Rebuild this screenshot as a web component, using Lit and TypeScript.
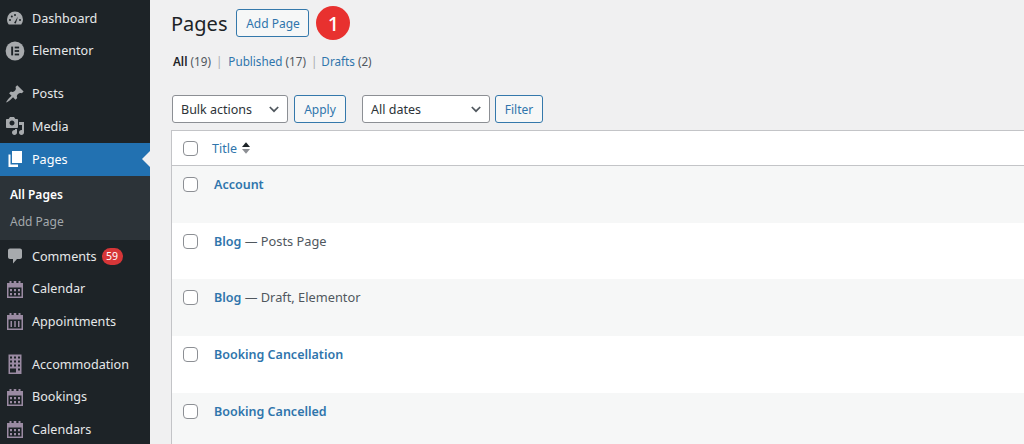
import { LitElement, html, css, svg } from "lit";
import { customElement } from "lit/decorators.js";

const ICONS: Record<string, unknown> = {
  dashboard: svg`<path d="M3.760 16.500h12.480A8 8 0 0 0 18 11.500a8 8 0 1 0-16 0c0 1.900.66 3.640 1.760 5z"/><g fill="#1d2327"><circle cx="5" cy="12" r="1"/><circle cx="6.800" cy="8.500" r="1"/><circle cx="10" cy="7" r="1"/><circle cx="15" cy="12" r="1"/><path d="M9 15 13 8.500l-2.200 7z"/></g>`,
  elementor: svg`<circle cx="10" cy="10" r="9.400"/><g fill="#1d2327"><rect x="6.200" y="5.600" width="1.900" height="8.800"/><rect x="9.700" y="5.600" width="4.400" height="1.800"/><rect x="9.700" y="9.100" width="4.400" height="1.800"/><rect x="9.700" y="12.600" width="4.400" height="1.800"/></g>`,
  posts: svg`<path d="M10.440 3.020l1.820-1.820 6.360 6.350-1.830 1.820c-1.050-.68-2.480-.57-3.410.36l-.75.75c-.92.93-1.040 2.350-.35 3.410l-1.830 1.820-2.410-2.410-2.800 2.790c-.42.42-3.380 2.710-3.800 2.290s1.860-3.390 2.280-3.810l2.790-2.790L4.100 9.360l1.830-1.820c1.050.69 2.480.57 3.400-.36l.75-.75c.93-.92 1.050-2.350.36-3.410z"/>`,
  media: svg`<path d="M13 11V4c0-.55-.45-1-1-1h-1.670L9 1H5L3.670 3H2c-.55 0-1 .45-1 1v7c0 .55.45 1 1 1h10c.55 0 1-.45 1-1zM7 4.500c1.380 0 2.500 1.120 2.500 2.500S8.380 9.500 7 9.500 4.500 8.380 4.500 7 5.620 4.500 7 4.500zM14 6h5v10.500c0 1.380-1.120 2.500-2.500 2.500S14 17.880 14 16.500s1.120-2.500 2.500-2.500c.17 0 .34.020.5.050V9h-3V6zm-4 8.050V13h2v3.500c0 1.380-1.120 2.500-2.500 2.500S7 17.880 7 16.500 8.120 14 9.500 14c.17 0 .34.020.5.050z"/>`,
  pages: svg`<path d="M7 14V2h10v12zm-1.500 1.500H13V18H3.500V5.500h2z"/>`,
  comments: svg`<path d="M5 2.500h10c1.100 0 2 .9 2 2v6.500c0 1.100-.9 2-2 2h-3l-4 4.500V13H5c-1.100 0-2-.9-2-2V4.500c0-1.100.9-2 2-2z"/>`,
  calendar: svg`<path fill-rule="evenodd" d="M2 4h2.500V2h2v2h2.200V2h2.600v2h2.200V2h2v2H18v15H2zM3.500 8.500v9h13v-9zM5 10h2v2.300H5zm4 0h2v2.300H9zm4 0h2v2.300h-2zM5 14h2v2.300H5zm4 0h2v2.300H9zm4 0h2v2.300h-2z"/>`,
  bars: svg`<path fill-rule="evenodd" d="M2 4h2.500V2h2v2h2.200V2h2.600v2h2.200V2h2v2H18v15H2zM3.500 8.500v9h13v-9zM5.500 10H7v6H5.500zm3.750 0h1.500v6h-1.500zM13 10h1.500v6H13z"/>`,
  building: svg`<path fill-rule="evenodd" d="M3.500 .5h13V20h-13zM5 2.500v2h2v-2zm4 0v2h2v-2zm4 0v2h2v-2zM5 6.500v2h2v-2zm4 0v2h2v-2zm4 0v2h2v-2zM5 10.500v2h2v-2zm4 0v2h2v-2zm4 0v2h2v-2zm0 4v2h2v-2zM5 14.500v4h6v-4z"/>`,
};

interface MenuItem { label: string; icon: string; tone?: string; badge?: string; current?: boolean; gap?: boolean; }

const MENU: MenuItem[] = [
  { label: "Dashboard", icon: "dashboard" },
  { label: "Elementor", icon: "elementor" },
  { label: "Posts", icon: "posts", gap: true },
  { label: "Media", icon: "media" },
  { label: "Pages", icon: "pages", current: true },
  { label: "Comments", icon: "comments", badge: "59" },
  { label: "Calendar", icon: "calendar", tone: "plum" },
  { label: "Appointments", icon: "bars", tone: "plum" },
  { label: "Accommodation", icon: "building", tone: "plum", gap: true },
  { label: "Bookings", icon: "calendar", tone: "plum" },
  { label: "Calendars", icon: "calendar", tone: "plum" },
];

const ROWS = [
  { title: "Account", state: "" },
  { title: "Blog", state: " — Posts Page" },
  { title: "Blog", state: " — Draft, Elementor" },
  { title: "Booking Cancellation", state: "" },
  { title: "Booking Cancelled", state: "" },
];

const chevron = html`<svg class="chev" viewBox="0 0 10 7" width="10" height="7"><path d="M.8 1 5 5.200 9.200 1" fill="none" stroke="#50575e" stroke-width="1.700"/></svg>`;

@customElement("app-root")
export class AppRoot extends LitElement {
  static styles = css`
    :host {
      display: flex;
      width: 1024px;
      height: 444px;
      overflow: hidden;
      background: #f0f0f1;
      font-family: "Noto Sans", "Open Sans", sans-serif;
      font-size: 12.500px;
      color: #3c434a;
    }
    .side {
      width: 150px;
      flex: none;
      background: #1d2327;
      padding-top: 2px;
      box-sizing: border-box;
    }
    .item {
      position: relative;
      display: flex;
      align-items: center;
      height: 32.500px;
      color: #e6e8e9;
      font-size: 12.600px;
    }
    .item.gap { margin-top: 10.600px; }
    .item svg.ic {
      width: 20px;
      height: 20px;
      margin: 0 7px 0 5px;
      fill: #a7aaad;
      flex: none;
    }
    .item.plum svg.ic { fill: #9a8aa2; }
    .item.current {
      background: #2271b1;
      color: #fff;
      height: 33px;
    }
    .item.current svg.ic { fill: #fff; }
    .item.current::after {
      content: "";
      position: absolute;
      right: 0;
      top: 50%;
      margin-top: -8px;
      border: 8px solid transparent;
      border-right-color: #f0f0f1;
      border-left-width: 0;
    }
    .badge {
      margin-left: 5px;
      min-width: 21px;
      height: 17px;
      line-height: 16px;
      border-radius: 9px;
      background: #d63638;
      color: #fff;
      font-size: 10.500px;
      text-align: center;
    }
    .sub {
      background: #2c3338;
      padding: 6.500px 0 5px 10px;
      font-size: 12px;
      color: #a3a8ac;
    }
    .sub div { height: 26.500px; line-height: 26px; }
    .sub .on { color: #fff; font-weight: 600; }
    .main {
      flex: 1;
      min-width: 0;
      padding-left: 21px;
    }
    .head {
      display: flex;
      align-items: center;
      height: 48px;
      padding-bottom: 2px;
      box-sizing: border-box;
    }
    h1 {
      margin: 0;
      font-size: 20px;
      font-weight: 400;
      color: #1d2327;
    }
    .btn {
      box-sizing: border-box;
      display: inline-flex;
      align-items: center;
      justify-content: center;
      height: 28px;
      border: 1px solid #3478ab;
      border-radius: 3px;
      background: #f6f7f7;
      color: #2f75ac;
      font-size: 12px;
    }
    .add { width: 73px; margin-left: 9px; }
    .num {
      margin-left: 7px;
      width: 34px;
      height: 34px;
      border-radius: 50%;
      background: #e8312f;
      color: #fff;
      font-size: 20px;
      font-weight: 500;
      display: flex;
      align-items: center;
      justify-content: center;
    }
    .filters {
      display: flex;
      height: 26px;
      margin-left: 2px;
      align-items: center;
      font-size: 11.700px;
      color: #50575e;
    }
    .filters b { color: #1d2327; font-weight: 600; }
    .filters a { color: #2f75ac; }
    .filters i { font-style: normal; color: #a7aaad; margin: 0 5px; }
    .filters i:first-of-type { margin-right: 6px; }
    .filters i:last-of-type { margin-right: 4px; }
    .filters span { white-space: pre; }
    .bar {
      display: flex;
      align-items: center;
      margin: 21px 0 0 1px;
      height: 28px;
    }
    .sel {
      box-sizing: border-box;
      height: 28px;
      display: flex;
      align-items: center;
      justify-content: space-between;
      padding: 0 8px;
      background: #fff;
      border: 1px solid #8c8f94;
      border-radius: 3px;
      font-size: 12.500px;
      color: #2c3338;
    }
    .bulk { width: 116px; }
    .dates { width: 128px; margin-left: 16px; }
    .apply { width: 52px; margin-left: 6px; }
    .filter { width: 48px; margin-left: 5px; }
    .table {
      margin-top: 7px;
      background: #fff;
      border: 1px solid #c3c4c7;
      border-right: 0;
      border-bottom: 0;
    }
    .thead {
      display: flex;
      align-items: center;
      height: 34px;
      border-bottom: 1px solid #c3c4c7;
      color: #2f75ac;
      font-size: 12.500px;
    }
    .cb {
      box-sizing: border-box;
      width: 15px;
      height: 15px;
      margin-left: 11px;
      flex: none;
      background: #fff;
      border: 1px solid #8c8f94;
      border-radius: 4px;
    }
    .thead span { margin-left: 14px; }
    .sort { margin-left: 5px; }
    .row {
      display: flex;
      align-items: flex-start;
      height: 56.700px;
      padding-top: 11px;
      box-sizing: border-box;
      font-size: 12.800px;
      color: #50575e;
    }
    .row:nth-child(odd) { background: #f6f7f7; }
    .row .t { margin-left: 16px; line-height: 15px; white-space: pre; }
    .row b { color: #2f75ac; font-weight: 600; font-size: 12.500px; }
  `;

  render() {
    return html`
      <nav class="side">
        ${MENU.map(
          (m) => html`
            <div class="item ${m.gap ? "gap" : ""} ${m.current ? "current" : ""} ${m.tone ?? ""}">
              <svg class="ic" viewBox="0 0 20 20">${ICONS[m.icon]}</svg>
              ${m.label}
              ${m.badge ? html`<span class="badge">${m.badge}</span>` : null}
            </div>
            ${m.current
              ? html`<div class="sub"><div class="on">All Pages</div><div>Add Page</div></div>`
              : null}
          `
        )}
      </nav>
      <main class="main">
        <div class="head">
          <h1>Pages</h1>
          <div class="btn add">Add Page</div>
          <div class="num">1</div>
        </div>
        <div class="filters">
          <span><b>All</b> (19)</span><i>|</i>
          <span><a>Published</a> (17)</span><i>|</i>
          <span><a>Drafts</a> (2)</span>
        </div>
        <div class="bar">
          <div class="sel bulk">Bulk actions ${chevron}</div>
          <div class="btn apply">Apply</div>
          <div class="sel dates">All dates ${chevron}</div>
          <div class="btn filter">Filter</div>
        </div>
        <div class="table">
          <div class="thead">
            <div class="cb"></div>
            <span>Title</span>
            <svg class="sort" width="8" height="14" viewBox="0 0 9 14">
              <path d="M4.500 0.500 9 6H0z" fill="#1d2327"/>
              <path d="M4.500 13.500 0 8h9z" fill="#8c8f94"/>
            </svg>
          </div>
          <div class="rows">
            ${ROWS.map(
              (r) => html`<div class="row"><div class="cb"></div><div class="t"><b>${r.title}</b>${r.state}</div></div>`
            )}
          </div>
        </div>
      </main>
    `;
  }
}
